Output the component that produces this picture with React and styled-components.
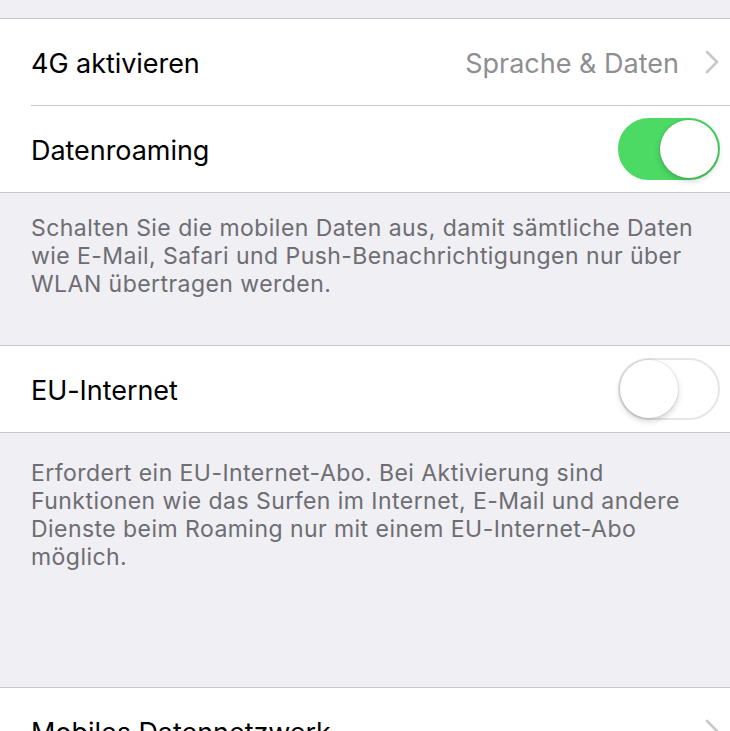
import React from "react";
import styled, { createGlobalStyle } from "styled-components";

const Global = createGlobalStyle`
  html, body { margin: 0; padding: 0; background: #efeff4; }
  body { font-family: Inter, "Liberation Sans", Arial, sans-serif; -webkit-font-smoothing: antialiased; }
`;

const Page = styled.div`
  width: 730px;
  height: 731px;
  overflow: hidden;
  background: #efeff4;
  padding-top: 18px;
  box-sizing: border-box;
`;

const Group = styled.div`
  background: #fff;
  border-top: 1px solid #c8c7cc;
  border-bottom: 1px solid #c8c7cc;
`;

const Row = styled.div`
  height: 86px;
  display: flex;
  align-items: center;
  padding-left: 31px;
  box-sizing: border-box;
  & + & {
    border-top: 1px solid #c8c7cc;
    margin-left: 31px;
    padding-left: 0;
    height: 87px;
  }
`;

const Label = styled.span`
  flex: 1;
  font-size: 27px;
  color: #000;
  letter-spacing: -0.05px;
  padding-top: 3px;
`;

const Detail = styled.span`
  font-size: 27px;
  color: #8e8e93;
  margin-right: 26px;
  padding-top: 3px;
`;

const Chevron = styled.svg`
  width: 14px;
  height: 24px;
  margin-right: 11px;
  flex: none;
`;

const Footer = styled.div`
  height: ${(p) => p.$h}px;
  box-sizing: border-box;
  padding: ${(p) => p.$top}px 31px 0 31px;
  font-size: 23px;
  letter-spacing: 0.45px;
  line-height: 28px;
  color: #6d6d72;
`;

const Track = styled.div`
  width: 102px;
  height: 62px;
  border-radius: 31px;
  box-sizing: border-box;
  margin-right: 10px;
  position: relative;
  flex: none;
  background: ${(p) => (p.$on ? "#4cd964" : "#fff")};
  border: 2px solid ${(p) => (p.$on ? "#4cd964" : "#e5e5ea")};
`;

const Knob = styled.div`
  position: absolute;
  top: 0px;
  ${(p) => (p.$on ? "right: 0px;" : "left: 0px;")}
  width: 58px;
  height: 58px;
  border-radius: 50%;
  background: #fff;
  box-shadow: 0 3px 6px rgba(0,0,0,0.18), 0 0 0 1px rgba(0,0,0,0.06);
`;

const Toggle = ({ on }) => (
  <Track $on={on}>
    <Knob $on={on} />
  </Track>
);

const Arrow = () => (
  <Chevron viewBox="0 0 14 24">
    <path d="M2 2 L12 12 L2 22" fill="none" stroke="#c7c7cc" strokeWidth="2.6" strokeLinecap="round" strokeLinejoin="round" />
  </Chevron>
);

export default function App() {
  return (
    <>
      <Global />
      <Page>
        <Group>
          <Row>
            <Label>4G aktivieren</Label>
            <Detail>Sprache &amp; Daten</Detail>
            <Arrow />
          </Row>
          <Row>
            <Label>Datenroaming</Label>
            <Toggle on />
          </Row>
        </Group>
        <Footer $h={152} $top={21}>
          Schalten Sie die mobilen Daten aus, damit sämtliche Daten wie E-Mail, Safari und Push-Benachrichtigungen nur über WLAN übertragen werden.
        </Footer>
        <Group>
          <Row>
            <Label>EU-Internet</Label>
            <Toggle on={false} />
          </Row>
        </Group>
        <Footer $h={254} $top={26}>
          Erfordert ein EU-Internet-Abo. Bei Aktivierung sind Funktionen wie das Surfen im Internet, E-Mail und andere Dienste beim Roaming nur mit einem EU-Internet-Abo möglich.
        </Footer>
        <Group>
          <Row>
            <Label>Mobiles Datennetzwerk</Label>
            <Arrow />
          </Row>
        </Group>
      </Page>
    </>
  );
}
